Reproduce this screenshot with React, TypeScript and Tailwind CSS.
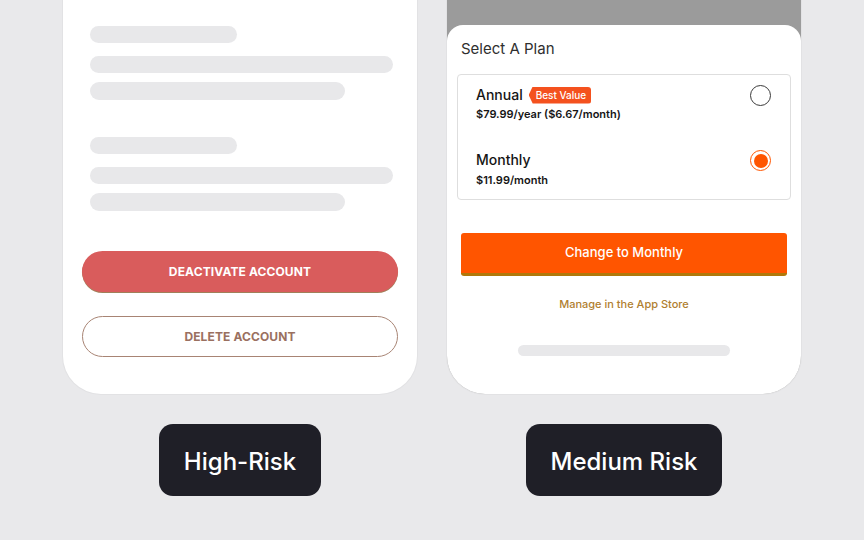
import React from 'react';

function SkeletonGroup() {
  return (
    <div className="flex flex-col">
      <div className="h-[17px] w-[147px] rounded-full bg-[#e8e8ea]" />
      <div className="mt-[13px] h-[17px] w-[303px] rounded-full bg-[#e8e8ea]" />
      <div className="mt-[9px] h-[18px] w-[255px] rounded-full bg-[#e8e8ea]" />
    </div>
  );
}

function Radio({ checked }: { checked?: boolean }) {
  if (checked) {
    return (
      <div className="flex h-[21px] w-[21px] items-center justify-center rounded-full border-[1.5px] border-[#ff5500]">
        <div className="h-[14px] w-[14px] rounded-full bg-[#ff5500]" />
      </div>
    );
  }
  return <div className="h-[21px] w-[21px] rounded-full border-[1.5px] border-[#3a3a3a]" />;
}

export default function App() {
  return (
    <div
      className="flex h-[540px] w-[864px] flex-col items-center bg-[#e9e9eb]"
      style={{ fontFamily: 'Inter, "Noto Sans", sans-serif' }}
    >
      {/* Phones */}
      <div className="flex gap-[30px]">
        {/* High-risk phone */}
        <div className="flex h-[394px] w-[354px] flex-col rounded-b-[38px] bg-white px-[27px] pt-[26px] shadow-[0_0_0_1px_#e2e2e4]">
          <SkeletonGroup />
          <div className="mt-[37px]">
            <SkeletonGroup />
          </div>
          <div className="-mx-[8px] mt-[40px] flex flex-col">
            <button className="flex h-[41px] w-[316px] items-center justify-center rounded-full bg-[#d95c5c] text-[12px] font-bold tracking-[0.01em] text-white shadow-[0_1px_0_#a0805a]">
              DEACTIVATE ACCOUNT
            </button>
            <button className="mt-[24px] flex h-[41px] w-[316px] items-center justify-center rounded-full border border-[#a88474] bg-white text-[12px] font-bold tracking-[0.01em] text-[#9a7060]">
              DELETE ACCOUNT
            </button>
          </div>
        </div>

        {/* Medium-risk phone */}
        <div className="flex h-[394px] w-[354px] flex-col overflow-hidden rounded-b-[38px] bg-[#9b9b9b] shadow-[0_0_0_1px_#e2e2e4]">
          <div className="h-[25px] shrink-0" />
          <div className="flex flex-1 flex-col rounded-t-[16px] bg-white">
            <div className="px-[14px] pt-[14px] text-[15px] leading-[20px] text-[#2f2f2f]">Select A Plan</div>
            <div className="mx-[10px] mt-[15px] flex h-[126px] flex-col rounded-[4px] border border-[#dedede] pl-[18px] pr-[19px]">
              <div className="flex items-start justify-between pt-[10px]">
                <div className="flex flex-col">
                  <div className="flex items-center gap-[6px]">
                    <span className="text-[14px] font-medium leading-[20px] text-[#151515]">Annual</span>
                    <span className="flex h-[17px] items-center rounded-r-[3px] bg-[#f4511e] pl-[7px] pr-[5px] text-[10px] font-medium text-white [clip-path:polygon(4px_0,100%_0,100%_100%,4px_100%,0_50%)]">
                      Best Value
                    </span>
                  </div>
                  <span className="mt-[1px] text-[11px] font-semibold leading-[16px] text-[#151515]">$79.99/year ($6.67/month)</span>
                </div>
                <Radio />
              </div>
              <div className="mt-[28px] flex items-start justify-between">
                <div className="flex flex-col">
                  <span className="text-[14px] font-medium leading-[20px] text-[#151515]">Monthly</span>
                  <span className="mt-[2px] text-[11px] font-semibold leading-[16px] text-[#151515]">$11.99/month</span>
                </div>
                <Radio checked />
              </div>
            </div>
            <button className="mx-[14px] mt-[33px] flex h-[43px] items-center justify-center rounded-[3px] border-b-[3px] border-[#b0780a] bg-[#ff5500] text-[13px] font-medium text-white">
              Change to Monthly
            </button>
            <div className="mt-[20px] text-center text-[11px] font-medium leading-[16px] text-[#b08030]">
              Manage in the App Store
            </div>
            <div className="mx-auto mt-[33px] h-[11px] w-[212px] rounded-full bg-[#e8e8ea]" />
          </div>
        </div>
      </div>

      {/* Labels */}
      <div className="mt-[30px] flex gap-[30px]">
        <div className="flex w-[354px] justify-center">
          <div className="flex h-[72px] w-[162px] items-center justify-center rounded-[14px] bg-[#1f1f27] pt-[3px] text-[24px] font-medium text-white">
            High-Risk
          </div>
        </div>
        <div className="flex w-[354px] justify-center">
          <div className="flex h-[72px] w-[196px] items-center justify-center rounded-[14px] bg-[#1f1f27] pt-[3px] text-[24px] font-medium text-white">
            Medium Risk
          </div>
        </div>
      </div>
    </div>
  );
}
